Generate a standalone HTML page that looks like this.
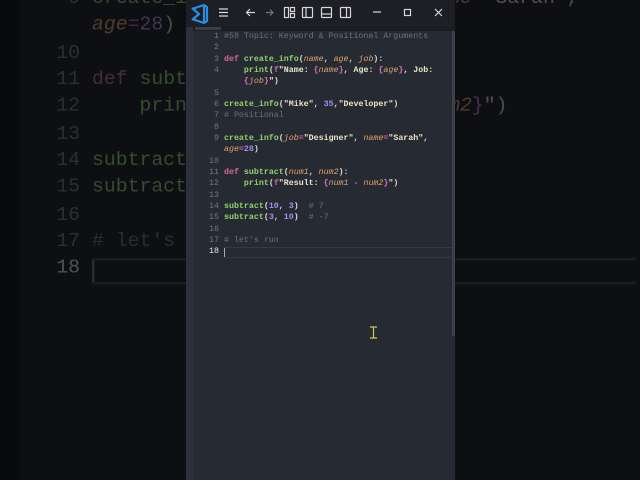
<!DOCTYPE html>
<html style="width:640px;height:480px;overflow:hidden;background:#0e0f13"><head><meta charset="utf-8"><style>
*{margin:0;padding:0;box-sizing:border-box}
body{width:640px;height:480px;overflow:hidden;background:#0e0f13;position:relative;font-family:"Liberation Mono",monospace}
#clip{position:absolute;left:0;top:0;width:640px;height:480px;overflow:hidden}
.code{position:absolute;left:0;top:0;width:640px;height:480px}
.row{position:absolute;left:224px;height:11.33px;line-height:11.33px;font-size:8.3px;white-space:pre;color:#d8d8d0;font-weight:bold}
.ln{position:absolute;left:196px;width:23px;text-align:right;height:11.33px;line-height:11.33px;font-size:8.3px;color:#6f7686}
.k{color:#d6679f}.f{color:#8fd46a}.p{color:#e1a26b;font-style:italic;font-weight:normal}.s{color:#ece3c4}.n{color:#a48cf0}.c{color:#6b7180;font-weight:normal}.b{color:#d86ed0}.w{color:#e8e8e0}
#bg{transform-origin:0 0;transform:translate(-441.8px,-330.5px) scale(2.383);opacity:.3;height:340px;overflow:hidden}
#bg .row{font-weight:normal}
#bg .cur{border-color:#3a3e48}
#bg .cur div{background:#777 !important}
#bgdim{position:absolute;left:0;top:0;width:20px;height:480px;background:rgba(0,0,0,.3)}
#win{position:absolute;left:186px;top:0;width:269px;height:480px;background:#262a33;overflow:hidden}
#title{position:absolute;left:0;top:0;width:269px;height:27px;background:#1d1f25}
#tabs{position:absolute;left:0;top:27px;width:269px;height:4px;background:#1b1d22}
#gut{position:absolute;left:0;top:27px;width:7px;height:453px;background:#2c303a}
#sb{position:absolute;left:266px;top:31px;width:3px;height:305px;background:#3c404a}
.cur{position:absolute;left:224px;top:246.5px;width:228px;height:11.5px;border-top:1px solid #353944;border-bottom:1px solid #353944}
</style></head><body>
<div id="clip">
<div class="code" id="bg"></div>
<div id="bgdim"></div>
<div id="win">
<div id="title">
<svg width="269" height="27" viewBox="0 0 269 27">
<path d="M6 8 L13 14 L6 20 M6 9 L18 5 L21 7 L21 21 L18 23 L6 19 M18 5 L18 23" fill="none" stroke="#2a8fe0" stroke-width="2.2" stroke-linejoin="round"/>
<g stroke="#d8d8d8" stroke-width="1.2" fill="none">
<path d="M33 9h9M33 12.5h9M33 16h9"/>
<path d="M69 12.5h-8M64 9l-3.5 3.5 3.5 3.5"/>
<path d="M80 12.5h7M84 9.5l3 3-3 3" stroke="#777"/>
<rect x="98.5" y="7.5" width="4" height="10"/><rect x="104.5" y="7.5" width="4" height="4"/><rect x="104.5" y="13.5" width="4" height="4"/>
<rect x="116.5" y="7.5" width="10" height="10" rx="1"/><path d="M120 7.5v10"/>
<rect x="135.5" y="7.5" width="10" height="10" rx="1"/><path d="M135.5 14h10"/>
<rect x="154.5" y="7.5" width="10" height="10" rx="1"/><path d="M160.5 7.5v10"/>
<path d="M187 12h8"/>
<rect x="218.5" y="9.5" width="6" height="6"/>
<path d="M249 9l7 7M256 9l-7 7"/>
</g></svg>
</div>
<div id="tabs"><div style="position:absolute;left:9px;top:0;width:26px;height:3px;background:#3a3e48"></div></div>
<div id="gut"></div>
<div id="sb"></div>
</div>
<div class="code" id="fg"></div>
<svg style="position:absolute;left:369px;top:326px" width="9" height="13"><path d="M1 1h7M1 12h7M4.5 1v11" stroke="#d8c84a" stroke-width="1.2" fill="none"/></svg>
</div>
<script>
var rows=[
['1','<span class="c">#58 Topic: Keyword &amp; Positional Arguments</span>'],
['2',''],
['3','<span class="k">def</span> <span class="f">create_info</span>(<span class="p">name</span>, <span class="p">age</span>, <span class="p">job</span>):'],
['4','    <span class="f">print</span>(<span class="k">f</span><span class="s">"Name: </span><span class="b">{</span><span class="p">name</span><span class="b">}</span><span class="s">, Age: </span><span class="b">{</span><span class="p">age</span><span class="b">}</span><span class="s">, Job:</span>'],
['','    <span class="b">{</span><span class="p">job</span><span class="b">}</span><span class="s">"</span>)'],
['5',''],
['6','<span class="f">create_info</span>(<span class="s">"Mike"</span>, <span class="n">35</span>,<span class="s">"Developer"</span>)'],
['7','<span class="c"># Positional</span>'],
['8',''],
['9','<span class="f">create_info</span>(<span class="p">job</span><span class="k">=</span><span class="s">"Designer"</span>, <span class="p">name</span><span class="k">=</span><span class="s">"Sarah"</span>,'],
['','<span class="p">age</span><span class="k">=</span><span class="n">28</span>)'],
['10',''],
['11','<span class="k">def</span> <span class="f">subtract</span>(<span class="p">num1</span>, <span class="p">num2</span>):'],
['12','    <span class="f">print</span>(<span class="k">f</span><span class="s">"Result: </span><span class="b">{</span><span class="p">num1</span> <span class="k">-</span> <span class="p">num2</span><span class="b">}</span><span class="s">"</span>)'],
['13',''],
['14','<span class="f">subtract</span>(<span class="n">10</span>, <span class="n">3</span>)  <span class="c"># 7</span>'],
['15','<span class="f">subtract</span>(<span class="n">3</span>, <span class="n">10</span>)  <span class="c"># -7</span>'],
['16',''],
['17','<span class="c"># let\'s run</span>'],
['18','']
];
var h='';
for(var i=0;i<rows.length;i++){var t=31+i*11.33;
h+='<div class="ln" style="top:'+t+'px'+(i==19?';color:#e8e8e8':'')+'">'+rows[i][0]+'</div><div class="row" style="top:'+t+'px">'+rows[i][1]+'</div>';}
h+='<div class="cur"><div style="position:absolute;left:0;top:0;width:1px;height:9px;background:#aaa"></div></div>';
document.getElementById('fg').innerHTML=h;
document.getElementById('bg').innerHTML=h;
</script>
</body></html>
